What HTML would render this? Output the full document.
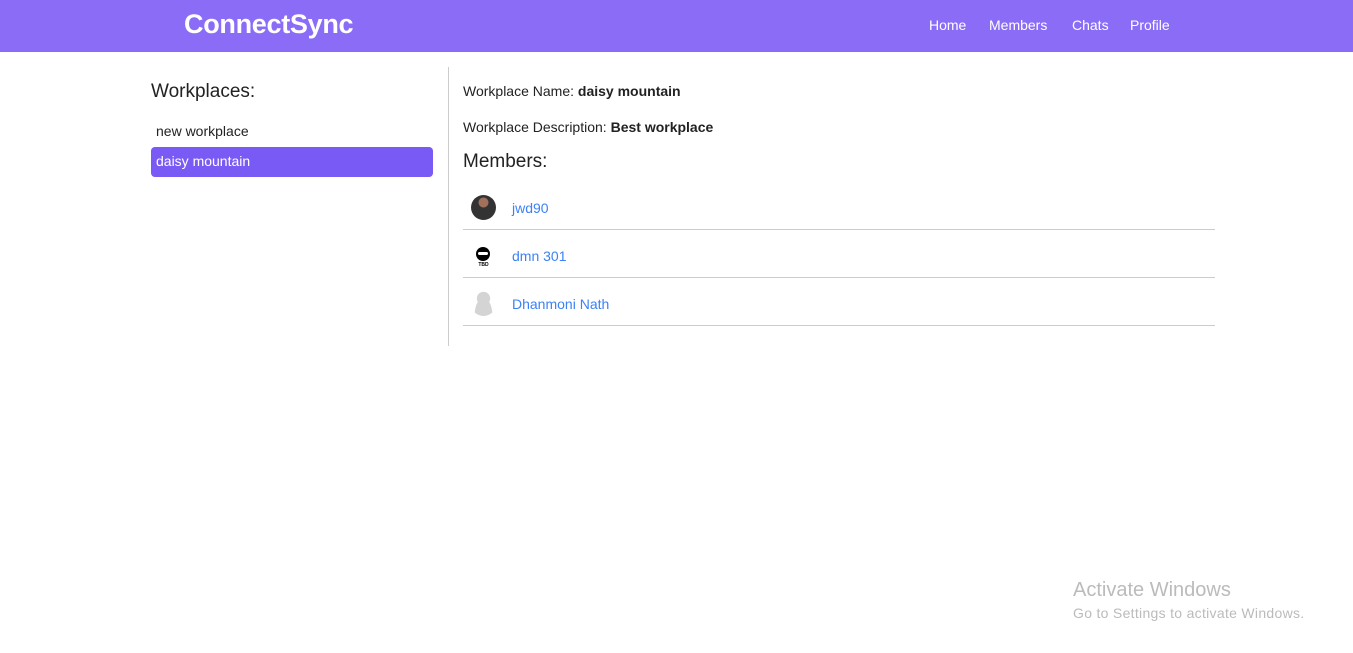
<!DOCTYPE html>
<html><head><style>
*{margin:0;padding:0;box-sizing:border-box}
body{width:1353px;height:653px;background:#fff;font-family:"Liberation Sans",sans-serif;position:relative;overflow:hidden;color:#222}
.nav{position:absolute;left:0;top:0;width:1353px;height:52px;background:#8a6cf7}
.logo{position:absolute;left:184px;top:9px;color:#fff;font-size:27px;font-weight:bold;letter-spacing:-0.3px}
.links{position:absolute;top:17px;color:#fff;font-size:14px}
.a{position:absolute;font-size:14px}
.vl{position:absolute;left:448px;top:67px;width:1px;height:279px;background:#ccc}
.hr{position:absolute;left:463px;width:752px;height:1px;background:#ccc}
.av{position:absolute;left:471px;width:25px;height:25px;border-radius:50%}
.nm{position:absolute;left:512px;color:#3b82f6;font-size:14px}
</style></head><body>
<div class="nav">
<div class="logo">ConnectSync</div>
<div class="links" style="left:929px">Home</div>
<div class="links" style="left:989px">Members</div>
<div class="links" style="left:1072px">Chats</div>
<div class="links" style="left:1130px">Profile</div>
</div>
<div class="a" style="left:151px;top:81px;font-size:19px">Workplaces:</div>
<div class="a" style="left:156px;top:123px">new workplace</div>
<div style="position:absolute;left:151px;top:147px;width:282px;height:30px;background:#7a5af5;border-radius:4px;color:#fff;font-size:14px;padding:6px 5px">daisy mountain</div>
<div class="vl"></div>
<div class="a" style="left:463px;top:83px">Workplace Name: <b>daisy mountain</b></div>
<div class="a" style="left:463px;top:119px">Workplace Description: <b>Best workplace</b></div>
<div class="a" style="left:463px;top:151px;font-size:19px">Members:</div>
<div class="av" style="top:195px;background:radial-gradient(circle at 50% 30%,#a0705a 0 22%,#333 24% 100%)"></div>
<div class="nm" style="top:200px">jwd90</div>
<div class="hr" style="top:229px"></div>
<svg class="av" style="top:243px" viewBox="0 0 25 25"><circle cx="12" cy="11" r="7" fill="#000"/><rect x="7" y="9" width="10" height="3" rx="1.5" fill="#fff"/><text x="12.5" y="23" font-size="5" font-weight="bold" text-anchor="middle" font-family="Liberation Sans">TBD</text></svg>
<div class="nm" style="top:248px">dmn 301</div>
<div class="hr" style="top:277px"></div>
<div class="av" style="top:291px;background:radial-gradient(circle at 50% 30%,#d4d4d4 0 30%,transparent 32%),radial-gradient(ellipse at 50% 100%,#d4d4d4 0 50%,transparent 52%)"></div>
<div class="nm" style="top:296px">Dhanmoni Nath</div>
<div class="hr" style="top:325px"></div>
<div class="a" style="left:1073px;top:579px;font-size:20px;color:#bbb">Activate Windows</div>
<div class="a" style="left:1073px;top:605px;color:#bbb;letter-spacing:0.3px">Go to Settings to activate Windows.</div>
</body></html>
